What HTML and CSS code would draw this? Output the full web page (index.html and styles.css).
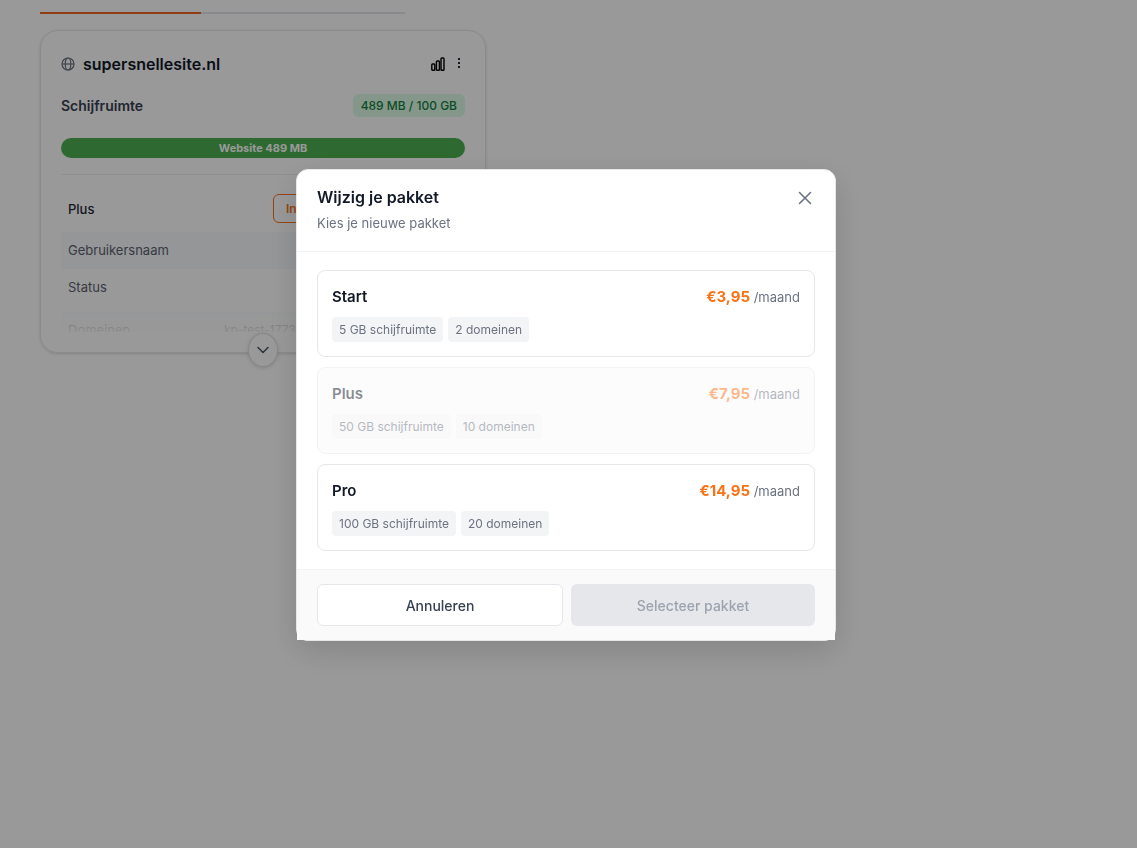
FILE: index.html
```html
<!DOCTYPE html>
<html lang="nl">
<head>
    <meta charset="UTF-8">
    <meta name="viewport" content="width=device-width, initial-scale=1.0">
    <title>Wijzig je pakket</title>
    <link rel="stylesheet" href="styles.css">
</head>
<body>
    <main class="page">
        <div class="tabs"><div class="tab-active"></div></div>

        <section class="site-card">
            <div class="site-header">
                <svg class="globe" viewBox="0 0 14 14" width="14" height="14" fill="none" stroke="#6b7280" stroke-width="1.2">
                    <circle cx="7" cy="7" r="6"/>
                    <ellipse cx="7" cy="7" rx="2.8" ry="6"/>
                    <path d="M1 7h12"/>
                </svg>
                <h1>supersnellesite.nl</h1>
                <button class="icon-button" type="button" aria-label="Statistieken">
                    <svg viewBox="0 0 14 14" width="14" height="14" fill="none" stroke="#000" stroke-width="1.4">
                        <rect x="0.8" y="7" width="3" height="6.2" rx="0.8"/>
                        <rect x="5.4" y="4" width="3" height="9.2" rx="0.8"/>
                        <rect x="10" y="1" width="3" height="12.2" rx="0.8"/>
                    </svg>
                </button>
                <button class="icon-button" type="button" aria-label="Meer opties">
                    <svg viewBox="0 0 12 14" width="12" height="14" fill="#1f2937">
                        <path d="M5 1h2v2H5zM5 5h2v2H5zM5 9h2v2H5z"/>
                    </svg>
                </button>
            </div>

            <div class="storage">
                <h2>Schijfruimte</h2>
                <span class="storage-badge">489 MB / 100 GB</span>
            </div>
            <div class="storage-bar">Website 489 MB</div>

            <div class="details">
                <div class="row row-plan">
                    <span>Plus</span>
                    <button class="login-button" type="button">Inloggen</button>
                </div>
                <div class="row row-grey">Gebruikersnaam</div>
                <div class="row row-status">Status</div>
                <div class="row row-grey row-domains">
                    <span>Domeinen</span>
                    <span class="domain">kp-test-17732</span>
                </div>
            </div>

            <button class="toggle" type="button" aria-label="Meer tonen">
                <svg viewBox="0 0 12 8" width="12" height="8" fill="none" stroke="#4b5563" stroke-width="1.5" stroke-linecap="round" stroke-linejoin="round">
                    <path d="M1 1.5l5 5 5-5"/>
                </svg>
            </button>
        </section>
    </main>

    <div class="overlay">
        <div class="modal" role="dialog" aria-labelledby="modalTitle">
            <div class="modal-header">
                <div>
                    <h2 id="modalTitle">Wijzig je pakket</h2>
                    <p>Kies je nieuwe pakket</p>
                </div>
                <button class="close" type="button" aria-label="Sluiten">
                    <svg viewBox="0 0 14 14" width="14" height="14" fill="none" stroke="#6b7280" stroke-width="1.6" stroke-linecap="round">
                        <path d="M1.5 1.5l11 11M12.5 1.5l-11 11"/>
                    </svg>
                </button>
            </div>

            <div class="modal-body">
                <button class="plan" type="button">
                    <span class="plan-top">
                        <span class="plan-name">Start</span>
                        <span class="plan-price"><b>€3,95</b> /maand</span>
                    </span>
                    <span class="tags"><span class="tag">5 GB schijfruimte</span><span class="tag">2 domeinen</span></span>
                </button>
                <button class="plan" type="button" disabled>
                    <span class="plan-top">
                        <span class="plan-name">Plus</span>
                        <span class="plan-price"><b>€7,95</b> /maand</span>
                    </span>
                    <span class="tags"><span class="tag">50 GB schijfruimte</span><span class="tag">10 domeinen</span></span>
                </button>
                <button class="plan" type="button">
                    <span class="plan-top">
                        <span class="plan-name">Pro</span>
                        <span class="plan-price"><b>€14,95</b> /maand</span>
                    </span>
                    <span class="tags"><span class="tag">100 GB schijfruimte</span><span class="tag">20 domeinen</span></span>
                </button>
            </div>

            <div class="modal-footer">
                <button class="cancel" type="button">Annuleren</button>
                <button class="submit" type="button" disabled>Selecteer pakket</button>
            </div>
        </div>
    </div>
</body>
</html>
```

FILE: styles.css
```css
/* General Styles */
* {
    box-sizing: border-box;
}

body {
    font-family: Inter, "Liberation Sans", sans-serif;
    font-size: 13px;
    color: #5b6270;
    background: #fff;
    margin: 0;
}

h1, h2, p {
    margin: 0;
}

button {
    font-family: inherit;
    cursor: pointer;
}

.page {
    min-height: 100vh;
    padding: 0 40px;
}

/* Tabs */
.tabs {
    display: flex;
    align-items: flex-end;
    max-width: 365px;
    height: 14px;
    margin-bottom: 16px;
    box-shadow: inset 0 -2px #e5e7eb;
}

.tab-active {
    width: 44%;
    height: 2px;
    background: #f26522;
}

/* Site card */
.site-card {
    position: relative;
    max-width: 446px;
    padding: 19px 20px 20px;
    border: 1px solid #e5e7eb;
    border-radius: 18px;
    box-shadow: 0 1px 3px rgba(0, 0, 0, 0.15);
}

.site-header {
    display: flex;
    align-items: center;
    gap: 8px;
    height: 28px;
}

.site-header h1 {
    flex: 1;
    font-size: 16px;
    font-weight: 600;
    color: #111827;
}

.icon-button {
    display: flex;
    padding: 0;
    border: none;
    background: none;
}

.storage {
    display: flex;
    justify-content: space-between;
    align-items: center;
    margin-top: 16px;
}

.storage h2 {
    font-size: 14px;
    font-weight: 600;
    color: #374151;
}

.storage-badge {
    padding: 0 8px;
    border-radius: 6px;
    background: #dcfce7;
    color: #15803d;
    font-size: 12px;
    font-weight: 500;
    line-height: 23px;
}

.storage-bar {
    margin-top: 21px;
    border-radius: 10px;
    background: #4caf50;
    color: #fff;
    font-size: 11px;
    font-weight: 700;
    line-height: 20px;
    text-align: center;
}

.details {
    position: relative;
    height: 158px;
    margin-top: 16px;
    border-top: 1px solid #eef0f3;
    overflow: hidden;
}

/* Fade out the last visible row */
.details::after {
    content: "";
    position: absolute;
    left: 0;
    right: 0;
    bottom: 0;
    height: 40px;
    background: linear-gradient(rgba(255, 255, 255, 0), rgba(255, 255, 255, 0.9));
}

.row {
    display: flex;
    padding: 0 7px;
    line-height: 36px;
}

.row-grey {
    height: 37px;
    background: #f8fafc;
}

.row-plan {
    align-items: center;
    margin-top: 10px;
    height: 47px;
    color: #1f2937;
    font-weight: 500;
}

.row-plan span {
    width: 205px;
}

.row-status {
    height: 43px;
}

.login-button {
    flex: 1;
    height: 29px;
    padding: 0 12px;
    border: 1px solid #f97316;
    border-radius: 6px;
    background: #fff;
    color: #f97316;
    font-size: 12px;
    font-weight: 600;
    text-align: left;
}

.row-domains span:first-child {
    width: 148px;
}

.domain {
    padding: 0 8px;
    font-size: 12px;
}

.toggle {
    position: absolute;
    left: calc(50% - 15px);
    bottom: -15px;
    display: flex;
    align-items: center;
    justify-content: center;
    width: 30px;
    height: 34px;
    padding: 0;
    border: 1px solid #dfe1e5;
    border-radius: 50%;
    background: #fff;
    box-shadow: 0 1px 4px rgba(0, 0, 0, 0.15);
}

/* Modal */
.overlay {
    position: fixed;
    inset: 0;
    display: flex;
    justify-content: center;
    align-items: center;
    padding: 0 5px 38px 0;
    background: rgba(0, 0, 0, 0.4);
}

.modal {
    width: 540px;
    max-width: 100%;
    border: 1px solid #e5e7eb;
    border-radius: 12px;
    background: #fff;
    box-shadow: 0 10px 32px rgba(0, 0, 0, 0.14);
}

.modal-header {
    display: flex;
    justify-content: space-between;
    align-items: flex-start;
    padding: 15px 20px 18px;
    border-bottom: 1px solid #f3f4f6;
}

.modal-header h2 {
    font-size: 16px;
    font-weight: 600;
    line-height: 24px;
    color: #111827;
}

.modal-header p {
    margin-top: 4px;
    font-size: 13px;
    line-height: 20px;
    color: #6b7280;
}

.close {
    display: flex;
    padding: 6px 3px;
    border: none;
    background: none;
}

.modal-body {
    display: flex;
    flex-direction: column;
    gap: 10px;
    padding: 18px 20px;
}

.plan {
    display: flex;
    flex-direction: column;
    gap: 8px;
    padding: 14px;
    border: 1px solid #e5e7eb;
    border-radius: 8px;
    background: #fff;
    text-align: left;
}

.plan:disabled {
    background: #f9fafb;
    opacity: 0.5;
    cursor: not-allowed;
}

.plan-top {
    display: flex;
    justify-content: space-between;
    width: 100%;
    line-height: 24px;
}

.plan-name {
    font-size: 15px;
    font-weight: 600;
    color: #111827;
}

.plan-price {
    font-size: 13px;
    color: #6b7280;
}

.plan-price b {
    font-size: 15px;
    color: #f97316;
}

.tags {
    display: flex;
    gap: 5px;
}

.tag {
    padding: 0 7px;
    border-radius: 4px;
    background: #f3f4f6;
    color: #6b7280;
    font-size: 12px;
    line-height: 25px;
}

.modal-footer {
    display: flex;
    gap: 8px;
    padding: 14px 20px;
    border-top: 1px solid #f3f4f6;
    background: #fafafa;
}

.modal-footer button {
    flex: 1;
    height: 42px;
    border-radius: 6px;
    font-size: 14px;
    font-weight: 500;
}

.cancel {
    border: 1px solid #e5e7eb;
    background: #fff;
    color: #374151;
}

.submit {
    border: none;
    background: #e5e7eb;
    color: #9ca3af;
}
```
